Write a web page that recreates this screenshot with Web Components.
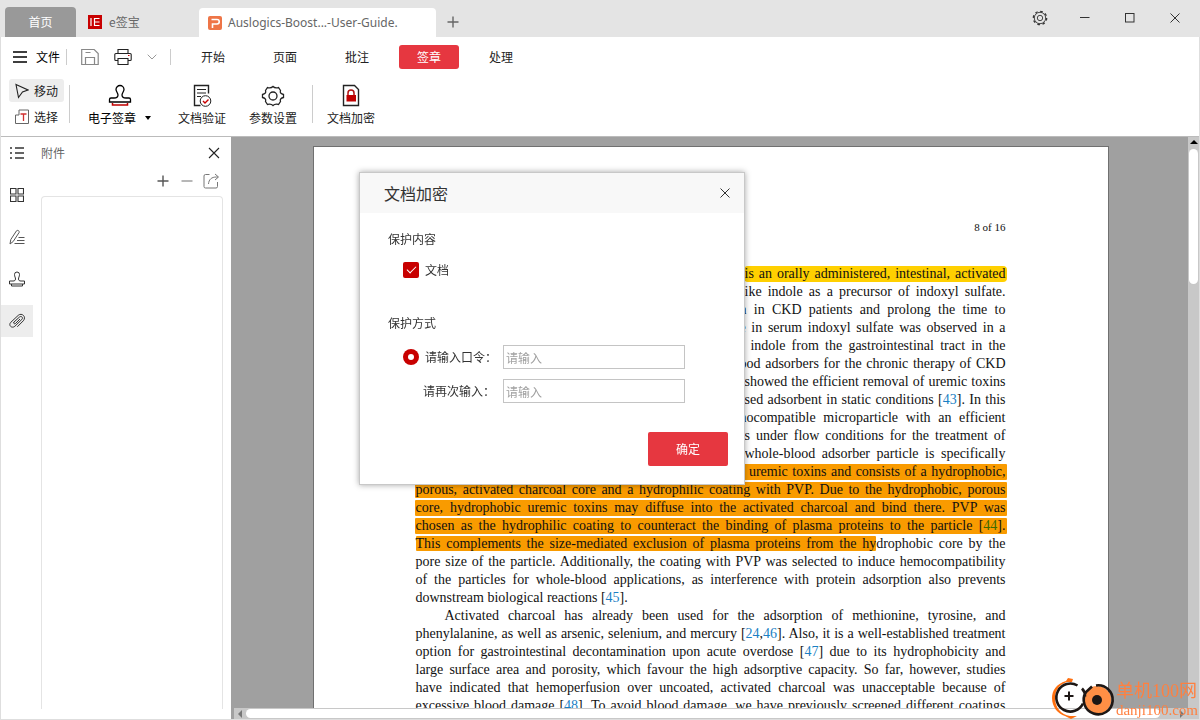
<!DOCTYPE html>
<html lang="zh-CN">
<head>
<meta charset="utf-8">
<meta name="viewport" content="width=device-width, initial-scale=1">
<title>Auslogics-Boost...-User-Guide.</title>
<style>
html, body { margin: 0; height: 100%; overflow: hidden; }
body { font-family: "Noto Sans CJK SC", sans-serif; font-size: 12px; line-height: 16px; color: #333; }
</style>
</head>
<body>
<pdf-app></pdf-app>

<script>
const BASE = `
  *, *::before, *::after { box-sizing: border-box; }
  button { font: inherit; color: inherit; background: none; border: 0; padding: 0; margin: 0; display: inline-flex; align-items: center; justify-content: center; white-space: nowrap; }
`;

function define(tag, css, html) {
  const template = document.createElement('template');
  template.innerHTML = `<style>${BASE}${css}</style>${html}`;
  customElements.define(tag, class extends HTMLElement {
    constructor() {
      super();
      this.attachShadow({ mode: 'open' }).append(template.content.cloneNode(true));
    }
  });
}

/* name: [width, height, markup] */
const ICONS = {
  esign: [14, 14, '<rect width="14" height="14" fill="#c80000" stroke="none"/><path d="M3 3v8M6 3.500h5.500M6 7h5.500M6 10.500h5.500M6.500 3v8" stroke="#fff" stroke-width="1.200"/>'],
  pdf: [14, 14, '<rect width="14" height="14" rx="2" fill="#ee7547" stroke="none"/><path d="M3.500 3.500H9a2.200 2.200 0 0 1 0 4.500H4.500V12" stroke="#fff" stroke-width="1.600"/>'],
  plus: [12, 12, '<path d="M6 .5v11M.5 6h11" stroke-width="1.400"/>'],
  minus: [12, 12, '<path d="M.5 6h11" stroke-width="1.200"/>'],
  min: [10, 10, '<path d="M0 4.500h9.500"/>'],
  max: [10, 10, '<rect x=".5" y=".5" width="8.500" height="8.500"/>'],
  close: [12, 12, '<path d="M1 1l10 10M11 1L1 11" stroke-width="1.100"/>'],
  smallclose: [10, 10, '<path d="M.5.5l9 9M9.500.5l-9 9"/>'],
  settings: [16, 16, '<circle cx="8" cy="8" r="5.700" stroke-width=".9"/><circle cx="8" cy="8" r="6.700" stroke-width="1.300" stroke-dasharray="2.630 2.630"/><circle cx="8" cy="8" r="2.700" stroke-width=".9"/>'],
  menu: [14, 12, '<path d="M0 1h14M0 6h14M0 11h14" stroke-width="1.300"/>'],
  save: [18, 18, '<path d="M.7 1.500h12.500l4 4V16.500H.7zM4.500 16.500v-7h9v7M4.500 4.500h5" stroke="#888" stroke-width="1.200"/>'],
  print: [18, 18, '<path d="M4 5.500V1.500h10v4M4 12.500H1.800a1 1 0 0 1-1-1v-5a1 1 0 0 1 1-1h14.400a1 1 0 0 1 1 1v5a1 1 0 0 1-1 1H14" stroke-width="1.100"/><path d="M4 10.500h10v6H4z" stroke-width="1.100"/><path d="M14 7.500h1.500" stroke="#c80000"/>'],
  chevron: [10, 6, '<path d="M.7.700L5 5 9.300.7" stroke="#999"/>'],
  cursor: [14, 16, '<path d="M1 1.500l12 5.500-5.500 2-4 5.500z" stroke-width="1.100"/>'],
  select: [14, 16, '<path d="M4 1h9.500v13.500H.5V6H4z" stroke="#666"/><path d="M5.500 5h6M8.500 5v7" stroke="#d03030" stroke-width="1.300"/>'],
  stampred: [24, 24, '<path d="M10 11c0-2-2-3.500-2-5.500a4 4 0 0 1 8 0c0 2-2 3.500-2 5.500s1.500 3 4 3h3c1 0 1.500.5 1.500 1.500V18h-21v-2.500C1.500 14.500 2 14 3 14h3c2.500 0 4-1 4-3z" stroke-width="1.300"/><path d="M4.500 19v2h15v-2" stroke="#c00000" stroke-width="1.500"/>'],
  verify: [20, 24, '<path d="M8.500 21.500H2.500v-20h14v8" stroke-width="1.400"/><path d="M5 5.500h9M5 9h9M5 12.500h4"/><circle cx="13.500" cy="17" r="5.300"/><path d="M11 17l2 2 3.500-3.500" stroke="#c80000" stroke-width="1.400"/>'],
  gear: [24, 24, '<path d="M12 2.500c2 2 3 1.700 5.500 1l2 3c-1 2.500 1 3.500 3 4v3c-2 .5-4 1.500-3 4l-2 3c-2.500-.7-3.500-1-5.500 1-2-2-3-1.700-5.500-1l-2-3c1-2.500-1-3.500-3-4v-3c2-.5 4-1.500 3-4l2-3c2.500.7 3.500 1 5.500-1z" stroke-width="1.300"/><circle cx="12" cy="12" r="4" stroke-width="1.300"/>'],
  lock: [18, 24, '<path d="M1.500 1.500h11l4 4v16h-15z" stroke-width="1.400"/><path d="M6 11V9a3 3 0 0 1 6 0v2" stroke="#b01010" stroke-width="1.500"/><rect x="4.500" y="11" width="9.500" height="6.500" fill="#c00000" stroke="none"/>'],
  list: [14, 12, '<path d="M0 1h2M5 1h9M0 6h2M5 6h9M0 11h2M5 11h9" stroke-width="1.400"/>'],
  grid: [14, 14, '<path d="M.5.5H6V6H.5zM8 .5h5.500V6H8zM.5 8H6v5.500H.5zM8 8h5.500v5.500H8z" stroke-width="1.100"/>'],
  pen: [16, 16, '<path d="M1 15l.8-4.500L7.500 1.800C8.200.7 10.900 2 10.200 3.300L4.200 12.500zM5.500 14.500H15.500M8 11.500h7.500M9.500 8.500h6" stroke="#555"/>'],
  stamp: [16, 16, '<path d="M6.500 8C6.500 6.500 5.500 5.500 5.500 3.500a2.500 2.500 0 0 1 5 0c0 2-1 3-1 4.500s1 2 2.500 2h3.500v3H.5v-3H4c1.500 0 2.500-.5 2.500-2zM2.500 13v2h11v-2"/>'],
  clip: [18, 16, '<path d="M5.500 9.500l6-5.500c2-1.500 4 .7 2.300 2.500l-7 6.800c-3 2.500-6.800-1-4-4l7.500-7c3.500-3 8.500 1.500 5 5.500l-6 6M6 9c-1 1.200.5 2.500 1.500 1.500L12 6"/>'],
  share: [16, 16, '<path d="M6.500 1.500h-4a1.500 1.500 0 0 0-1.500 1.500v10.500a1.500 1.500 0 0 0 1.500 1.500h10.500a1.500 1.500 0 0 0 1.500-1.500V9M5.500 11c.3-4.500 3-7 8-7h1.500M12 1l3.500 3L12 7" stroke="#777"/>'],
  caret: [8, 4, '<path d="M1 0h6L4 4z" fill="#000" stroke="none"/>'],
  up: [8, 4, '<path d="M0 4h8L4 0z" fill="#000" stroke="none"/>'],
  left: [4, 8, '<path d="M4 0v8L0 4z" fill="#777" stroke="none"/>'],
  right: [4, 8, '<path d="M0 0v8l4-4z" fill="#777" stroke="none"/>'],
  brand: [64, 44, '<path d="M22 3l-5-1-2 3C5 8 1 15 1 22c0 9 6 16 13 18l6 3 6-3h-7C10 39 4 31 4 22c0-8 5-14 12-16h5z" fill="#ff7010" stroke="none"/><path d="M26.500 9.500A14 14 0 1 0 32 27.500" stroke="#1d1715" stroke-width="2.600"/><path d="M18 15.500v9M13.500 20h9" stroke="#1d1715" stroke-width="2"/><circle cx="46" cy="24" r="14" fill="#ff8f45" stroke="none"/><path d="M31 12.500c2 2 3 4 3 8M41 10.500l-6 5.500A14.500 14.500 0 1 0 45 9.500" stroke="#1d1715" stroke-width="2.600"/><circle cx="46" cy="24" r="5" fill="#1d1715" stroke="none"/>']
};

customElements.define('ui-icon', class extends HTMLElement {
  connectedCallback() {
    if (this.shadowRoot) return;
    const [w, h, body] = ICONS[this.getAttribute('name')];
    this.attachShadow({ mode: 'open' }).innerHTML =
      `<style>:host { display: inline-flex; flex: none; } svg { display: block; }</style>
       <svg width="${w}" height="${h}" viewBox="0 0 ${w} ${h}" fill="none" stroke="currentColor" aria-hidden="true">${body}</svg>`;
  }
});

define('title-bar', `
  :host { display: flex; align-items: flex-end; height: 37px; padding-left: 5px; background: #e4e4e4; color: #666; }
  button { height: 30px; }
  .home { width: 71px; background: #999; color: #fff; border-radius: 4px 4px 0 0; }
  .esign { width: 123px; justify-content: flex-start; padding-left: 12px; gap: 7px; }
  .file { width: 237px; justify-content: flex-start; height: 29px; padding-left: 9px; gap: 6px; background: #fff; border-radius: 4px 4px 0 0; }
  .file span { font-family: "Noto Sans", sans-serif; }
  .add { width: 34px; }
  .controls { display: flex; margin-left: auto; align-self: flex-start; align-items: center; height: 36px; color: #333; padding-right: 3px; }
  .controls button { width: 45px; }
`, `
  <button class="home">首页</button>
  <button class="esign"><ui-icon name="esign"></ui-icon><span>e签宝</span></button>
  <button class="file"><ui-icon name="pdf"></ui-icon><span>Auslogics-Boost...-User-Guide.</span></button>
  <button class="add" aria-label="新建"><ui-icon name="plus"></ui-icon></button>
  <div class="controls">
    <button aria-label="设置"><ui-icon name="settings"></ui-icon></button>
    <button aria-label="最小化"><ui-icon name="min"></ui-icon></button>
    <button aria-label="最大化"><ui-icon name="max"></ui-icon></button>
    <button aria-label="关闭"><ui-icon name="smallclose"></ui-icon></button>
  </div>
`);

define('menu-bar', `
  :host { display: flex; align-items: center; height: 40px; padding-left: 12px; color: #222; }
  .menu { gap: 9px; color: #000; }
  .rule { width: 1px; height: 16px; background: #ccc; }
  .menu + .rule { margin: 0 14px 0 6px; }
  .quick { display: flex; align-items: center; gap: 15px; margin-right: 13px; }
  nav { display: flex; gap: 12px; margin-left: 12px; }
  nav button { width: 60px; height: 24px; border-radius: 3px; }
  nav .on { background: #e63740; color: #fff; }
`, `
  <button class="menu"><ui-icon name="menu"></ui-icon>文件</button>
  <span class="rule"></span>
  <div class="quick">
    <button aria-label="保存"><ui-icon name="save"></ui-icon></button>
    <button aria-label="打印"><ui-icon name="print"></ui-icon></button>
    <button aria-label="更多"><ui-icon name="chevron"></ui-icon></button>
  </div>
  <span class="rule"></span>
  <nav>
    <button>开始</button><button>页面</button><button>批注</button><button class="on">签章</button><button>处理</button>
  </nav>
`);

define('tool-button', `
  :host { display: block; }
  button { flex-direction: column; gap: 2px; }
  .row { display: flex; align-items: center; gap: 8px; }
`, `
  <button><slot name="icon"></slot><span class="row"><slot></slot><slot name="after"></slot></span></button>
`);

define('tool-ribbon', `
  :host { display: flex; align-items: flex-start; height: 60px; padding: 2px 0 0 8px; border-bottom: 1px solid #bbb; color: #222; }
  .modes { display: flex; flex-direction: column; gap: 3px; }
  .modes button { width: 55px; height: 23px; border-radius: 3px; gap: 5px; }
  .modes .on { background: #ededed; }
  .rule { width: 1px; height: 38px; margin-top: 6px; background: #ccc; }
  tool-button { margin-top: 5px; }
  .modes + .rule { margin-left: 5px; margin-right: 18px; }
  .stamp { color: #000; margin-right: 26px; }
  .tools { display: flex; gap: 23px; margin-right: 15px; }
  .last { margin-left: 14px; }
`, `
  <div class="modes">
    <button class="on"><ui-icon name="cursor"></ui-icon>移动</button>
    <button><ui-icon name="select"></ui-icon>选择</button>
  </div>
  <span class="rule"></span>
  <tool-button class="stamp"><ui-icon slot="icon" name="stampred"></ui-icon>电子签章<ui-icon slot="after" name="caret"></ui-icon></tool-button>
  <div class="tools">
    <tool-button><ui-icon slot="icon" name="verify"></ui-icon>文档验证</tool-button>
    <tool-button><ui-icon slot="icon" name="gear"></ui-icon>参数设置</tool-button>
  </div>
  <span class="rule"></span>
  <tool-button class="last"><ui-icon slot="icon" name="lock"></ui-icon>文档加密</tool-button>
`);

define('side-rail', `
  :host { display: flex; flex-direction: column; gap: 10px; width: 32px; flex: none; }
  button { width: 32px; height: 32px; }
  button:first-child { height: 31px; }
  .on { background: #ededed; }
`, `
  <button aria-label="目录"><ui-icon name="list"></ui-icon></button>
  <button aria-label="缩略图"><ui-icon name="grid"></ui-icon></button>
  <button aria-label="批注"><ui-icon name="pen"></ui-icon></button>
  <button aria-label="签章"><ui-icon name="stamp"></ui-icon></button>
  <button class="on" aria-label="附件"><ui-icon name="clip"></ui-icon></button>
`);

define('attachment-panel', `
  :host { display: flex; flex-direction: column; width: 198px; flex: none; padding: 8px 8px 10px; }
  header { display: flex; justify-content: space-between; align-items: center; height: 16px; padding-right: 3px; color: #666; }
  header button { color: #222; }
  .actions { display: flex; justify-content: flex-end; align-items: center; gap: 8px; height: 16px; margin: 12px 4px 7px 0; color: #555; }
  .actions button { width: 16px; }
  .actions button:nth-child(2) { color: #888; }
  .files { flex: 1; border: 1px solid #e4e4e4; border-bottom: 0; border-radius: 4px 4px 0 0; }
`, `
  <header><span>附件</span><button aria-label="关闭面板"><ui-icon name="close"></ui-icon></button></header>
  <div class="actions">
    <button aria-label="添加"><ui-icon name="plus"></ui-icon></button>
    <button aria-label="删除"><ui-icon name="minus"></ui-icon></button>
    <button aria-label="导出"><ui-icon name="share"></ui-icon></button>
  </div>
  <div class="files"></div>
`);

define('document-page', `
  :host { display: block; width: 796px; height: 1124px; flex: none; padding: 71px 102px 0; background: #fff; border: 1px solid #707070; color: #111;
    font-family: "Liberation Serif", serif; font-size: 14px; line-height: 18px; }
  .folio { text-align: right; font-size: 11px; margin-bottom: 29px; }
  p { margin: 0; }
  p > span { display: block; white-space: nowrap; text-align: justify; text-align-last: justify; }
  .end { text-align-last: left; }
  .tail { margin-left: 329px; }
  .tail.early { margin-left: 324px; }
  .indent { padding-left: 29px; }
  a { color: #1a7fc4; text-decoration: none; }
  mark { color: #111; background: #f99b00; border-radius: 1px; }
  .full { display: flow-root; }
  .full mark { display: block; margin: 1px -1px; padding: 0 1px; line-height: 16px; }
  mark.yellow { background: #ffd000; border-radius: 4px; }
  mark a { color: #3f6a00; }
`, `
  <div class="folio">8 of 16</div>
  <p>
    <span class="tail full"><mark class="yellow">is an orally administered, intestinal, activated</mark></span>
    <span class="tail">ike indole as a precursor of indoxyl sulfate.</span>
    <span class="tail early">n in CKD patients and prolong the time to</span>
    <span class="tail early">e in serum indoxyl sulfate was observed in a</span>
    <span class="tail early">f indole from the gastrointestinal tract in the</span>
    <span class="tail early">ood adsorbers for the chronic therapy of CKD</span>
    <span class="tail">showed the efficient removal of uremic toxins</span>
    <span class="tail">sed adsorbent in static conditions [<a href="#ref43">43</a>]. In this</span>
    <span class="tail early">nocompatible microparticle with an efficient</span>
    <span class="tail">s under flow conditions for the treatment of</span>
    <span class="tail">whole-blood adsorber particle is specifically</span>
    <span class="tail full"><mark>&nbsp;uremic toxins and consists of a hydrophobic,</mark></span>
    <span class="full"><mark>porous, activated charcoal core and a hydrophilic coating with PVP. Due to the hydrophobic, porous</mark></span>
    <span class="full"><mark>core, hydrophobic uremic toxins may diffuse into the activated charcoal and bind there. PVP was</mark></span>
    <span class="full"><mark>chosen as the hydrophilic coating to counteract the binding of plasma proteins to the particle [<a href="#ref44">44</a>].</mark></span>
    <span><mark>This complements the size-mediated exclusion of plasma proteins from the hy</mark>drophobic core by the</span>
    <span>pore size of the particle. Additionally, the coating with PVP was selected to induce hemocompatibility</span>
    <span>of the particles for whole-blood applications, as interference with protein adsorption also prevents</span>
    <span class="end">downstream biological reactions [<a href="#ref45">45</a>].</span>
  </p>
  <p>
    <span class="indent">Activated charcoal has already been used for the adsorption of methionine, tyrosine, and</span>
    <span>phenylalanine, as well as arsenic, selenium, and mercury [<a href="#ref24">24</a>,<a href="#ref46">46</a>]. Also, it is a well-established treatment</span>
    <span>option for gastrointestinal decontamination upon acute overdose [<a href="#ref47">47</a>] due to its hydrophobicity and</span>
    <span>large surface area and porosity, which favour the high adsorptive capacity. So far, however, studies</span>
    <span>have indicated that hemoperfusion over uncoated, activated charcoal was unacceptable because of</span>
    <span>excessive blood damage [<a href="#ref48">48</a>]. To avoid blood damage, we have previously screened different coatings</span>
  </p>
`);

define('document-view', `
  :host { display: grid; grid-template: minmax(0, 1fr) 11px / minmax(0, 1fr) 11px; flex: 1; min-width: 0; background: #a0a0a0; }
  .canvas { display: flex; justify-content: center; align-items: flex-start; overflow: hidden; padding-top: 9px; padding-left: 2px; }
  .vertical { grid-row: span 2; display: flex; flex-direction: column; align-items: center; background: #c8c8c8; padding-top: 3px; gap: 5px; }
  .vertical i { width: 9px; height: 135px; border-radius: 5px; background: #fff; }
  .horizontal { display: flex; align-items: center; gap: 4px; margin-left: 3px; padding: 0 4px; background: #c8c8c8; }
  .horizontal i { flex: 1; height: 9px; border-radius: 5px; background: #fff; margin-right: 16px; }
`, `
  <div class="canvas"><document-page></document-page></div>
  <div class="vertical"><ui-icon name="up"></ui-icon><i></i></div>
  <div class="horizontal"><ui-icon name="left"></ui-icon><i></i><ui-icon name="right"></ui-icon></div>
`);

define('encrypt-dialog', `
  :host { display: block; width: 386px; background: #fff; border: 1px solid #c8c8c8; box-shadow: 0 0 6px rgba(0, 0, 0, .35); }
  header { display: flex; align-items: center; justify-content: space-between; height: 40px; padding: 0 14px 0 24px; background: #f8f8f8; }
  h2 { margin: 0; font-size: 16px; line-height: 24px; font-weight: 400; }
  form { padding: 18px 16px; }
  fieldset { border: 0; margin: 0 0 0 12px; padding: 0; min-width: 0; }
  legend { padding: 0; height: 16px; }
  .check, .field { display: flex; align-items: center; height: 24px; margin-left: 15px; gap: 6px; }
  .check { margin-top: 11px; margin-bottom: 33px; }
  .field { margin-top: 14px; }
  .field + .field { margin-top: 10px; }
  .field label { width: 72px; }
  .field + .field label { margin-left: 20px; }
  input { font: inherit; margin: 0; }
  [type=checkbox], [type=radio] { appearance: none; width: 16px; height: 16px; display: grid; place-items: center; background: #c80000; border-radius: 2px; }
  [type=checkbox]:checked::after { content: ""; width: 9px; height: 5px; margin-bottom: 3px; border: solid #fff; border-width: 0 0 1px 1px; transform: rotate(-45deg); }
  [type=radio] { border-radius: 50%; }
  [type=radio]:checked::after { content: ""; width: 6px; height: 6px; border-radius: 50%; background: #fff; }
  [type=password] { width: 182px; height: 24px; margin-left: auto; margin-right: 43px; padding: 0 2px; border: 1px solid #c4c4c4; background: #fff; outline: 0; }
  ::placeholder { color: #a0a0a0; opacity: 1; }
  .ok { display: flex; width: 80px; height: 34px; margin: 29px 0 0 auto; border-radius: 2px; background: #e63740; color: #fff; }
`, `
  <header><h2>文档加密</h2><button aria-label="关闭"><ui-icon name="smallclose"></ui-icon></button></header>
  <form>
    <fieldset>
      <legend>保护内容</legend>
      <div class="check"><input type="checkbox" id="doc" checked><label for="doc">文档</label></div>
    </fieldset>
    <fieldset>
      <legend>保护方式</legend>
      <div class="field"><input type="radio" aria-label="口令" checked><label for="pass">请输入口令：</label><input type="password" id="pass" placeholder="请输入"></div>
      <div class="field"><label for="again">请再次输入：</label><input type="password" id="again" placeholder="请输入"></div>
    </fieldset>
    <button class="ok" type="button">确定</button>
  </form>
`);

define('site-badge', `
  :host { display: flex; align-items: flex-end; gap: 1px; color: #ff8040; font-family: "Liberation Serif", "Noto Sans CJK SC", serif; }
  div { display: flex; flex-direction: column; padding-bottom: 1px; }
  .name { font-size: 18px; line-height: 20px; }
  .site { font-size: 15px; line-height: 18px; }
`, `
  <ui-icon name="brand"></ui-icon>
  <div><span class="name">单机100网</span><span class="site">danji100.com</span></div>
`);

define('pdf-app', `
  :host { display: flex; flex-direction: column; height: 100vh; background: #fff; }
  .frame { display: flex; flex-direction: column; flex: 1; min-height: 0; border: solid #dedede; border-width: 0 1px 1px; }
  main { display: flex; flex: 1; min-height: 0; }
  encrypt-dialog { position: fixed; left: 359px; top: 172px; }
  site-badge { position: fixed; right: 2px; bottom: 0; }
`, `
  <title-bar></title-bar>
  <div class="frame">
    <menu-bar></menu-bar>
    <tool-ribbon></tool-ribbon>
    <main>
      <side-rail></side-rail>
      <attachment-panel></attachment-panel>
      <document-view></document-view>
    </main>
  </div>
  <encrypt-dialog></encrypt-dialog>
  <site-badge></site-badge>
`);
</script>
</body>
</html>
